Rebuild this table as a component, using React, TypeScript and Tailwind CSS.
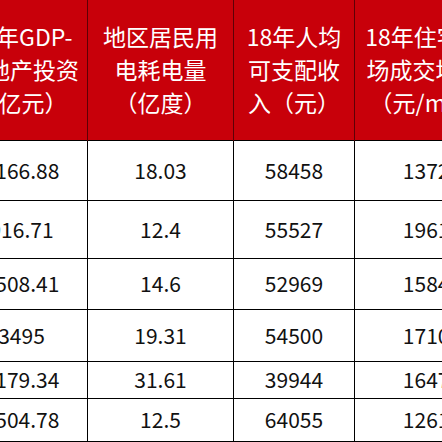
const FONT = "font-['Noto_Sans_CJK_SC','Noto_Sans',sans-serif]";

// header lines are forced where the source wraps them
const HEADERS: string[][] = [
  ["18年GDP-", "房地产投资", "（亿元）"],
  ["地区居民用", "电耗电量", "（亿度）"],
  ["18年人均", "可支配收", "入（元）"],
  ["18年住宅市", "场成交均价", "（元/m²）"],
];

const ROWS: { h: string; cells: string[] }[] = [
  { h: "h-[60px]", cells: ["3166.88", "18.03", "58458", "13720"] },
  { h: "h-[58px]", cells: ["916.71", "12.4", "55527", "19615"] },
  { h: "h-[51px]", cells: ["2508.41", "14.6", "52969", "15849"] },
  { h: "h-[52px]", cells: ["3495", "19.31", "54500", "17107"] },
  { h: "h-[37px]", cells: ["3179.34", "31.61", "39944", "16470"] },
  { h: "h-[43px]", cells: ["2504.78", "12.5", "64055", "12610"] },
];

export default function App() {
  return (
    <div className={`w-[442px] h-[442px] overflow-hidden bg-white ${FONT}`}>
      <table className="ml-[-45px] w-[538px] min-w-[538px] table-fixed border-collapse">
        <colgroup>
          <col className="w-[132px]" />
          <col className="w-[146px]" />
          <col className="w-[121px]" />
          <col className="w-[139px]" />
        </colgroup>
        <thead>
          <tr className="h-[140px] bg-[#c8000a]">
            {HEADERS.map((lines, i) => (
              <th
                key={i}
                className="border-x border-[#5e0006] p-0 text-center align-middle text-[23px] font-normal leading-[33px] text-white"
              >
                {lines.map((l) => (
                  <div key={l} className="whitespace-nowrap">
                    {l}
                  </div>
                ))}
              </th>
            ))}
          </tr>
        </thead>
        <tbody>
          {ROWS.map((r, ri) => (
            <tr key={ri} className={r.h}>
              {r.cells.map((c, ci) => (
                <td
                  key={ci}
                  className={`border border-black py-0 text-center align-middle text-[21px] leading-none text-[#111] ${
                    ci === 3 ? "pl-4 pr-0" : "px-0"
                  }`}
                >
                  {c}
                </td>
              ))}
            </tr>
          ))}
        </tbody>
      </table>
    </div>
  );
}
